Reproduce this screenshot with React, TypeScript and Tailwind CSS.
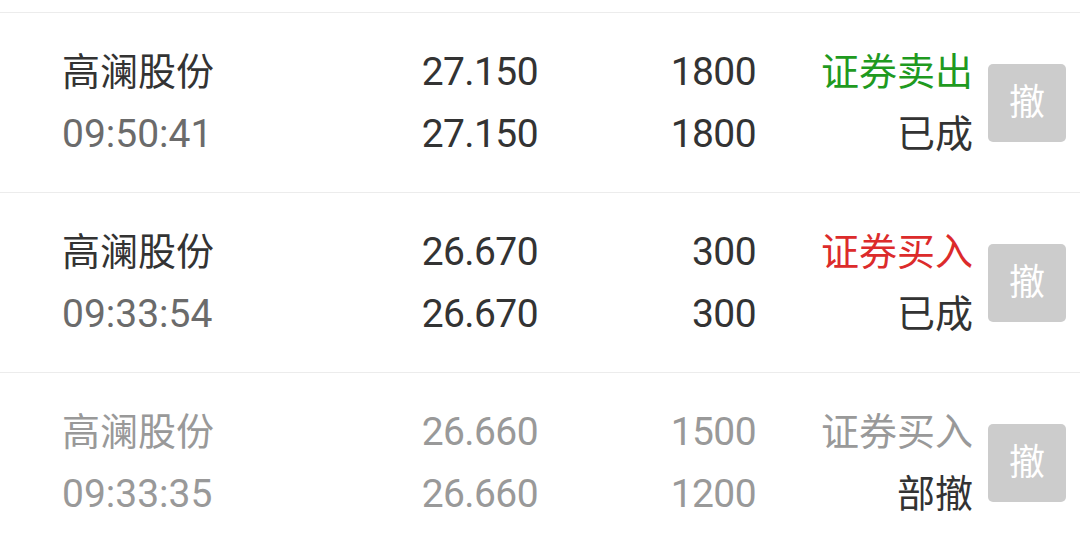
const rows = [
  { name: '高澜股份', time: '09:50:41', price: '27.150', dealPrice: '27.150', qty: '1800', dealQty: '1800', type: '证券卖出', typeColor: 'text-[#1f9a1f]', status: '已成', muted: false },
  { name: '高澜股份', time: '09:33:54', price: '26.670', dealPrice: '26.670', qty: '300', dealQty: '300', type: '证券买入', typeColor: 'text-[#dc2b2b]', status: '已成', muted: false },
  { name: '高澜股份', time: '09:33:35', price: '26.660', dealPrice: '26.660', qty: '1500', dealQty: '1200', type: '证券买入', typeColor: 'text-[#999999]', status: '部撤', muted: true },
];

const font = { fontFamily: 'Roboto, "Noto Sans CJK SC", sans-serif' };

export default function App() {
  return (
    <div className="w-[1080px] h-[544px] overflow-hidden bg-white" style={font}>
      <div className="h-[12px]" />
      {rows.map((r, i) => {
        const main = r.muted ? 'text-[#999999]' : 'text-[#333333]';
        const sub = r.muted ? 'text-[#999999]' : 'text-[#6b6b6b]';
        return (
          <div key={i} className="flex items-center border-t border-[#ececec] pl-[62px] pr-[14px] pt-[28px] pb-[27px] text-[38px] leading-[62px]">
            <div className="w-[256px]">
              <div className={main}>{r.name}</div>
              <div className={`${sub} text-[39px]`}>{r.time}</div>
            </div>
            <div className={`w-[220px] text-right text-[39px] tracking-[-0.6px] ${main}`}>
              <div>{r.price}</div>
              <div>{r.dealPrice}</div>
            </div>
            <div className={`w-[218px] text-right text-[39px] tracking-[-0.6px] ${main}`}>
              <div>{r.qty}</div>
              <div>{r.dealQty}</div>
            </div>
            <div className="w-[217px] text-right">
              <div className={r.typeColor}>{r.type}</div>
              <div className="text-[#333333]">{r.status}</div>
            </div>
            <button className="ml-[15px] flex h-[78px] w-[78px] items-center justify-center rounded-[5px] bg-[#cccccc] text-[36px] leading-none text-white">
              撤
            </button>
          </div>
        );
      })}
    </div>
  );
}
